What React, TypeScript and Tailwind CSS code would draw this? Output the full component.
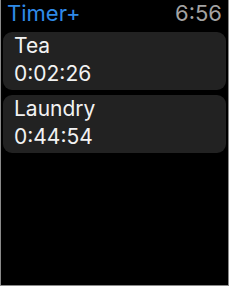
import React from "react";

const timers = [
  { name: "Tea", time: "0:02:26" },
  { name: "Laundry", time: "0:44:54" },
];

export default function App() {
  return (
    <div
      className="w-[229px] h-[286px] bg-black border-x border-b border-[#8a8a8a] flex flex-col overflow-hidden"
      style={{ fontFamily: "Inter, 'Noto Sans', sans-serif" }}
    >
      <div className="h-[32px] flex items-start justify-between pl-[6px] pr-[6px]">
        <span className="text-[22px] leading-[26px] text-[#2f8ae8]">Timer+</span>
        <span className="text-[22px] leading-[26px] text-[#a3a3a3]">6:56</span>
      </div>
      <div className="flex flex-col gap-[5px] px-[2px]">
        {timers.map((t) => (
          <div
            key={t.name}
            className="h-[58px] rounded-[9px] bg-[#222222] pl-[11px] flex flex-col text-[#f2f2f2] text-[21px] leading-[28px]"
          >
            <span>{t.name}</span>
            <span>{t.time}</span>
          </div>
        ))}
      </div>
    </div>
  );
}
